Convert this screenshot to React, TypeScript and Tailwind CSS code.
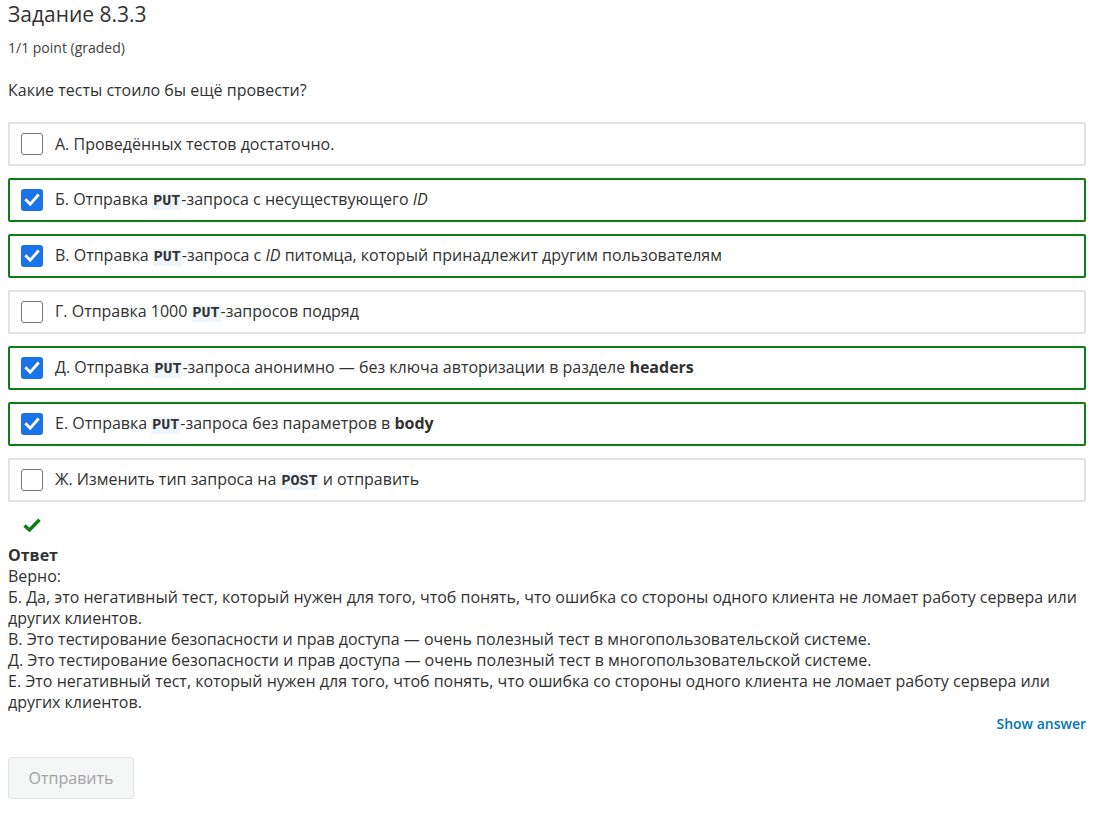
const options = [
  { key: 'a', checked: false, content: <>А. Проведённых тестов достаточно.</> },
  {
    key: 'b',
    checked: true,
    content: (
      <>
        Б. Отправка <Code>PUT</Code>-запроса с несуществующего <em>ID</em>
      </>
    ),
  },
  {
    key: 'c',
    checked: true,
    content: (
      <>
        В. Отправка <Code>PUT</Code>-запроса с <em>ID</em> питомца, который принадлежит другим пользователям
      </>
    ),
  },
  {
    key: 'd',
    checked: false,
    content: (
      <>
        Г. Отправка 1000 <Code>PUT</Code>-запросов подряд
      </>
    ),
  },
  {
    key: 'e',
    checked: true,
    content: (
      <>
        Д. Отправка <Code>PUT</Code>-запроса анонимно — без ключа авторизации в разделе <b>headers</b>
      </>
    ),
  },
  {
    key: 'f',
    checked: true,
    content: (
      <>
        Е. Отправка <Code>PUT</Code>-запроса без параметров в <b>body</b>
      </>
    ),
  },
  {
    key: 'g',
    checked: false,
    content: (
      <>
        Ж. Изменить тип запроса на <Code>POST</Code> и отправить
      </>
    ),
  },
];

function Code({ children }: { children: React.ReactNode }) {
  return (
    <code className="bg-[#eef6fb] px-px text-[15px] font-bold text-[#333] [font-family:'Liberation_Mono',monospace]">
      {children}
    </code>
  );
}

function Checkbox({ checked }: { checked: boolean }) {
  if (checked) {
    return (
      <span className="flex h-[22px] w-[22px] shrink-0 items-center justify-center rounded-[3px] bg-[#1a73e8]">
        <svg width="16" height="16" viewBox="0 0 16 16" fill="none">
          <path d="M2.3 8.3 L6.2 12.2 L13.8 3.6" stroke="white" strokeWidth="2.8" strokeLinecap="square" strokeLinejoin="miter" />
        </svg>
      </span>
    );
  }
  return <span className="h-[22px] w-[22px] shrink-0 rounded-[3px] border border-[#767676] bg-white" />;
}

export default function App() {
  return (
    <div className="min-h-screen bg-white pl-2 pr-3 text-[#313131] [font-family:'Open_Sans',sans-serif]">
      {/* header */}
      <h2 className="text-[21px] leading-[28px] text-[#313131]">Задание 8.3.3</h2>
      <div className="mt-[10px] text-[14px] leading-[20px] text-[#414141]">1/1 point (graded)</div>
      <p className="mt-[22px] text-[16px] leading-[21px]">Какие тесты стоило бы ещё провести?</p>

      {/* options */}
      <div className="mt-[21px] flex flex-col gap-3">
        {options.map((o) => (
          <label
            key={o.key}
            className={`flex h-[44px] items-center gap-[12px] rounded-[2px] border-2 pl-[11px] text-[16px] ${
              o.checked ? 'border-[#0d7d15]' : 'border-[#e2e2e2]'
            }`}
          >
            <Checkbox checked={o.checked} />
            <span>{o.content}</span>
          </label>
        ))}
      </div>

      {/* status */}
      <div className="mt-[16px] pl-[15px]">
        <svg width="18" height="14" viewBox="0 0 18 14">
          <path d="M1.5 7.5 L6.5 12 L16.5 1.8" stroke="#0d7d15" strokeWidth="3.4" fill="none" strokeLinejoin="miter" />
        </svg>
      </div>

      {/* answer */}
      <div className="mt-[13px] text-[16px] leading-[21px]">
        <div className="font-bold">Ответ</div>
        <div>Верно:</div>
        <div>
          Б. Да, это негативный тест, который нужен для того, чтоб понять, что ошибка со стороны одного клиента не ломает работу сервера или других клиентов.
        </div>
        <div>В. Это тестирование безопасности и прав доступа — очень полезный тест в многопользовательской системе.</div>
        <div>Д. Это тестирование безопасности и прав доступа — очень полезный тест в многопользовательской системе.</div>
        <div>
          Е. Это негативный тест, который нужен для того, чтоб понять, что ошибка со стороны одного клиента не ломает работу сервера или других клиентов.
        </div>
      </div>

      <div className="flex justify-end">
        <button className="text-[14px] font-semibold text-[#0075b4]">Show answer</button>
      </div>

      <button className="mt-[23px] h-[42px] w-[126px] rounded-[3px] border border-[#e4e4e4] bg-[#f5f6f6] text-[16px] text-[#a2a2a2]">
        Отправить
      </button>
    </div>
  );
}
